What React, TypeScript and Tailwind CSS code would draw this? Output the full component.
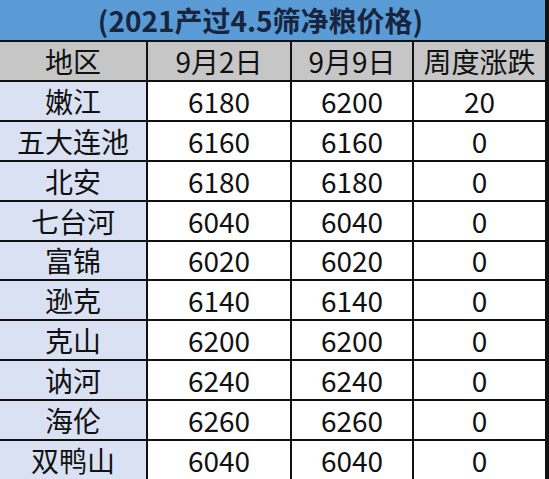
import React from "react";

const rows: [string, string, string, string][] = [
  ["嫩江", "6180", "6200", "20"],
  ["五大连池", "6160", "6160", "0"],
  ["北安", "6180", "6180", "0"],
  ["七台河", "6040", "6040", "0"],
  ["富锦", "6020", "6020", "0"],
  ["逊克", "6140", "6140", "0"],
  ["克山", "6200", "6200", "0"],
  ["讷河", "6240", "6240", "0"],
  ["海伦", "6260", "6260", "0"],
  ["双鸭山", "6040", "6040", "0"],
];

export default function App() {
  const font = {
    fontFamily: '"Noto Sans CJK SC", "Noto Sans", sans-serif',
  };
  return (
    <div
      className="w-[549px] h-[479px] bg-[#111] flex flex-col overflow-hidden text-[#111]"
      style={font}
    >
      <div className="w-[545px] h-[40px] shrink-0 bg-[#5b9bd5] flex items-center justify-center pr-[24px] text-[28px] font-bold text-[#172540] leading-none">
        (2021产过4.5筛净粮价格)
      </div>
      <div className="w-[545px] flex-1 grid grid-cols-[146px_142px_120px_131px] grid-rows-11 gap-[2px] pt-[2px] bg-[#111] text-[28px] leading-none">
        {["地区", "9月2日", "9月9日", "周度涨跌"].map((h) => (
          <div key={h} className="bg-[#c6c6c6] flex items-center justify-center">
            {h}
          </div>
        ))}
        {rows.map((r) => (
          <React.Fragment key={r[0]}>
            <div className="bg-[#d9e1f2] flex items-center justify-center">{r[0]}</div>
            <div className="bg-white flex items-center justify-center">{r[1]}</div>
            <div className="bg-white flex items-center justify-center">{r[2]}</div>
            <div className="bg-white flex items-center justify-center">{r[3]}</div>
          </React.Fragment>
        ))}
      </div>
    </div>
  );
}
